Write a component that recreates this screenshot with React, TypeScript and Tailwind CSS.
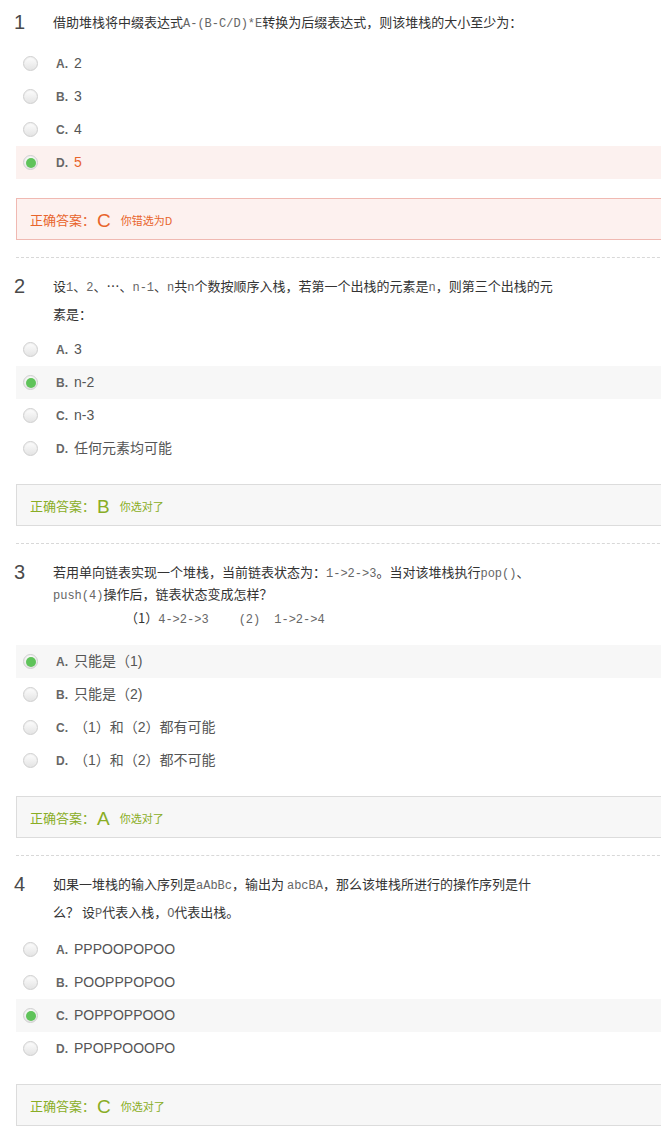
import React from 'react';

type Opt = { key: string; text: React.ReactNode };
type Q = {
  no: number;
  body: React.ReactNode;
  options: Opt[];
  picked: string;
  answer: string;
  note: string;
  gap: string;
  leading?: string;
};

const mono = 'font-["Liberation_Mono",monospace] text-[12px] text-[#666]';

function Radio({ on }: { on: boolean }) {
  return (
    <span className="flex h-[15px] w-[15px] items-center justify-center rounded-full border border-[#cfcfcf] bg-gradient-to-b from-[#fdfdfd] to-[#e4e4e4] shadow-[inset_0_1px_1px_rgba(0,0,0,0.05)]">
      {on && <span className="h-[10px] w-[10px] rounded-full bg-[#5fc35a]" />}
    </span>
  );
}

function Question({ q, last }: { q: Q; last: boolean }) {
  const right = q.picked === q.answer;
  return (
    <div className="pt-[9px]">
      <div className="-ml-[2px] flex">
        <div className='w-[39px] shrink-0 text-[20px] leading-[26px] text-[#4a4a4a] font-["Liberation_Sans",Arial,sans-serif]'>
          {q.no}
        </div>
        <div
          className={`whitespace-nowrap text-[13px] text-[#333] font-["Noto_Sans_CJK_SC",sans-serif] ${
            q.leading ?? 'leading-[26px]'
          }`}
        >
          {q.body}
        </div>
      </div>

      <div className={q.gap}>
        {q.options.map((o) => {
          const sel = o.key === q.picked;
          const bg = sel ? (right ? 'bg-[#f7f7f7]' : 'bg-[#fcf1ef]') : '';
          return (
            <div key={o.key} className={`flex h-[33px] items-center pl-[7px] ${bg}`}>
              <Radio on={sel} />
              <span className='ml-[18px] w-[18px] text-[12px] font-bold text-[#666] font-["Liberation_Sans",Arial,sans-serif]'>
                {o.key}.
              </span>
              <span
                className={`text-[14px] font-["Liberation_Sans","Noto_Sans_CJK_SC",sans-serif] ${
                  sel && !right ? 'text-[#e8642c]' : 'text-[#555]'
                }`}
              >
                {o.text}
              </span>
            </div>
          );
        })}
      </div>

      <div
        className={`mt-[19px] flex h-[42px] items-center border pl-[13px] pt-[2px] ${
          right ? 'border-[#dcdcdc] bg-[#f7f7f7] text-[#89ad25]' : 'border-[#f0b9b2] bg-[#fdf1ef] text-[#e8642c]'
        }`}
      >
        <span className='text-[13px] font-["Noto_Sans_CJK_SC",sans-serif]'>正确答案：</span>
        <span className='ml-[2px] text-[19px] leading-none font-["Liberation_Sans",Arial,sans-serif]'>{q.answer}</span>
        <span className='ml-[10px] text-[11px] font-["Noto_Sans_CJK_SC",sans-serif]'>{q.note}</span>
      </div>

      {!last && <div className="mt-[17px] border-t border-dashed border-[#d8d8d8]" />}
      {!last && <div className="h-[6px]" />}
    </div>
  );
}

const questions: Q[] = [
  {
    no: 1,
    body: (
      <>
        借助堆栈将中缀表达式<span className={mono}>A-(B-C/D)*E</span>转换为后缀表达式，则该堆栈的大小至少为：
      </>
    ),
    options: [
      { key: 'A', text: '2' },
      { key: 'B', text: '3' },
      { key: 'C', text: '4' },
      { key: 'D', text: '5' },
    ],
    picked: 'D',
    answer: 'C',
    note: '你错选为D',
    gap: 'mt-[10px]',
  },
  {
    no: 2,
    body: (
      <>
        设<span className={mono}>1</span>、<span className={mono}>2</span>、…、<span className={mono}>n-1</span>、
        <span className={mono}>n</span>共<span className={mono}>n</span>个数按顺序入栈，若第一个出栈的元素是
        <span className={mono}>n</span>，则第三个出栈的元
        <br />
        素是：
      </>
    ),
    options: [
      { key: 'A', text: '3' },
      { key: 'B', text: 'n-2' },
      { key: 'C', text: 'n-3' },
      { key: 'D', text: '任何元素均可能' },
    ],
    picked: 'B',
    answer: 'B',
    note: '你选对了',
    gap: 'mt-[6px]',
  },
  {
    no: 3,
    body: (
      <>
        若用单向链表实现一个堆栈，当前链表状态为：<span className={mono}>1-&gt;2-&gt;3</span>。当对该堆栈执行
        <span className={mono}>pop()</span>、
        <br />
        <span className={mono}>push(4)</span>操作后，链表状态变成怎样？
        <div className="mt-[2px] pl-[72px] leading-[20px]">
          （1）<span className={mono}>4-&gt;2-&gt;3</span>
          <span className="inline-block w-[30px]" />
          <span className={mono}>(2)</span>
          <span className="inline-block w-[14px]" />
          <span className={mono}>1-&gt;2-&gt;4</span>
        </div>
      </>
    ),
    options: [
      { key: 'A', text: '只能是（1)' },
      { key: 'B', text: '只能是（2)' },
      { key: 'C', text: '（1）和（2）都有可能' },
      { key: 'D', text: '（1）和（2）都不可能' },
    ],
    picked: 'A',
    answer: 'A',
    note: '你选对了',
    gap: 'mt-[15px]',
    leading: 'leading-[20px] pt-[3px]',
  },
  {
    no: 4,
    body: (
      <>
        如果一堆栈的输入序列是<span className={mono}>aAbBc</span>，输出为 <span className={mono}>abcBA</span>
        ，那么该堆栈所进行的操作序列是什
        <br />
        么？ 设<span className={mono}>P</span>代表入栈，<span className={mono}>O</span>代表出栈。
      </>
    ),
    options: [
      { key: 'A', text: 'PPPOOPOPOO' },
      { key: 'B', text: 'POOPPPOPOO' },
      { key: 'C', text: 'POPPOPPOOO' },
      { key: 'D', text: 'PPOPPOOOPO' },
    ],
    picked: 'C',
    answer: 'C',
    note: '你选对了',
    gap: 'mt-[6px]',
  },
];

export default function App() {
  return (
    <div className="h-[1146px] w-[661px] overflow-hidden bg-white">
      <div className="w-[700px] pl-[16px]">
        {questions.map((q, i) => (
          <Question key={q.no} q={q} last={i === questions.length - 1} />
        ))}
      </div>
    </div>
  );
}
